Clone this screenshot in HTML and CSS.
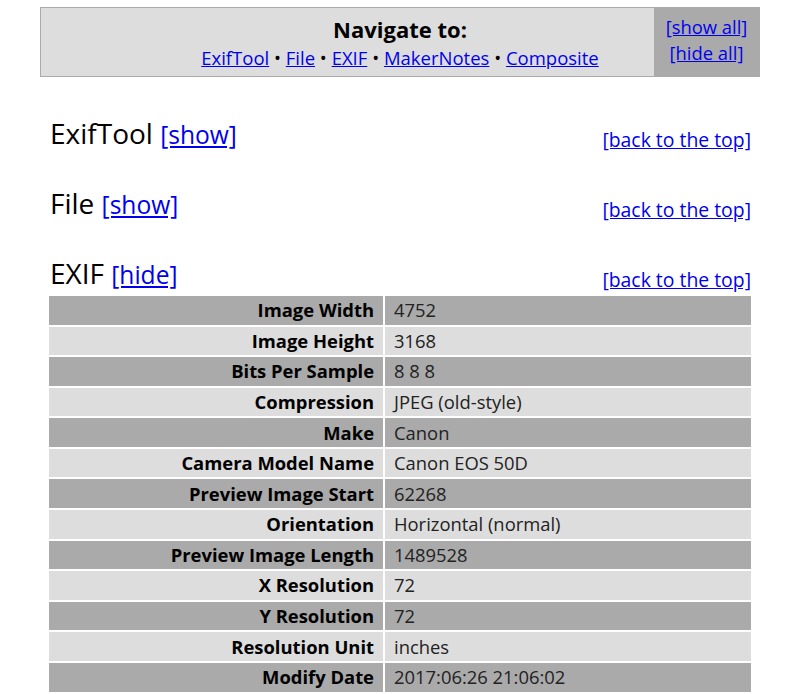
FILE: index.html
```html
<!DOCTYPE html>
<html>
<head>
<meta charset="utf-8">
<link rel="stylesheet" href="styles.css">
</head>
<body>
<div class="nav">
  <div class="nav-main">
    <div class="nav-title">Navigate to:</div>
    <div class="nav-links"><a href="#">ExifTool</a> • <a href="#">File</a> • <a href="#">EXIF</a> • <a href="#">MakerNotes</a> • <a href="#">Composite</a></div>
  </div>
  <div class="nav-side">
    <a href="#">[show all]</a>
    <a href="#">[hide all]</a>
  </div>
</div>
<div class="content">
  <div class="sec-head">
    <h2>ExifTool <a href="#">[show]</a></h2>
    <a class="top" href="#">[back to the top]</a>
  </div>
  <div class="sec-head">
    <h2>File <a href="#">[show]</a></h2>
    <a class="top" href="#">[back to the top]</a>
  </div>
  <div class="sec-head">
    <h2>EXIF <a href="#">[hide]</a></h2>
    <a class="top" href="#">[back to the top]</a>
  </div>
  <table class="tags">
    <tr class="dark"><th>Image Width</th><td>4752</td></tr>
    <tr class="light"><th>Image Height</th><td>3168</td></tr>
    <tr class="dark"><th>Bits Per Sample</th><td>8 8 8</td></tr>
    <tr class="light"><th>Compression</th><td>JPEG (old-style)</td></tr>
    <tr class="dark"><th>Make</th><td>Canon</td></tr>
    <tr class="light"><th>Camera Model Name</th><td>Canon EOS 50D</td></tr>
    <tr class="dark"><th>Preview Image Start</th><td>62268</td></tr>
    <tr class="light"><th>Orientation</th><td>Horizontal (normal)</td></tr>
    <tr class="dark"><th>Preview Image Length</th><td>1489528</td></tr>
    <tr class="light"><th>X Resolution</th><td>72</td></tr>
    <tr class="dark"><th>Y Resolution</th><td>72</td></tr>
    <tr class="light"><th>Resolution Unit</th><td>inches</td></tr>
    <tr class="dark"><th>Modify Date</th><td>2017:06:26 21:06:02</td></tr>
  </table>
</div>
</body>
</html>
```
FILE: styles.css
```css
html, body {
  margin: 0;
  padding: 0;
  background: #fff;
  font-family: "Open Sans", "DejaVu Sans", sans-serif;
  color: #000;
}
body {
  padding-top: 7px;
}
a {
  color: #0000ee;
  text-decoration: underline;
}
.nav {
  margin-left: 40px;
  width: 720px;
  height: 70px;
  box-sizing: border-box;
  border: 1px solid #aaa;
  background: #ddd;
  display: grid;
  grid-template-columns: 1fr 105px;
}
.nav-main {
  padding-left: 105px;
  text-align: center;
  padding-top: 7px;
}
.nav-title {
  font-weight: bold;
  font-size: 22px;
  line-height: 28px;
}
.nav-links {
  font-size: 18.5px;
  line-height: 26px;
  padding-top: 2px;
}
.nav-side {
  background: #aaa;
  display: flex;
  flex-direction: column;
  align-items: center;
  padding-top: 6px;
  font-size: 18.4px;
  line-height: 26px;
}
.content {
  margin-left: 49px;
  width: 702px;
  padding-top: 37px;
}
.sec-head {
  display: flex;
  justify-content: space-between;
  align-items: flex-end;
  margin-bottom: 32px;
}
.sec-head:nth-of-type(3) {
  margin-bottom: 2px;
}
.sec-head h2 {
  margin: 0 0 0 1px;
  font-weight: normal;
  font-size: 28px;
  line-height: normal;
}
.sec-head h2 a {
  font-size: 24.6px;
}
.top {
  font-size: 19.4px;
  line-height: normal;
  position: relative;
  top: 1px;
}
.tags {
  border-spacing: 2px;
  margin-left: -2px;
  width: 706px;
  font-size: 18.4px;
}
.tags th, .tags td {
  height: 28.58px;
  box-sizing: border-box;
  padding: 0 9px;
  line-height: 24px;
}
.tags th {
  width: 334px;
  text-align: right;
  font-weight: bold;
  color: #000;
}
.tags td {
  text-align: left;
  color: #222;
}
.dark th, .dark td {
  background: #aaa;
}
.light th, .light td {
  background: #ddd;
}
```
